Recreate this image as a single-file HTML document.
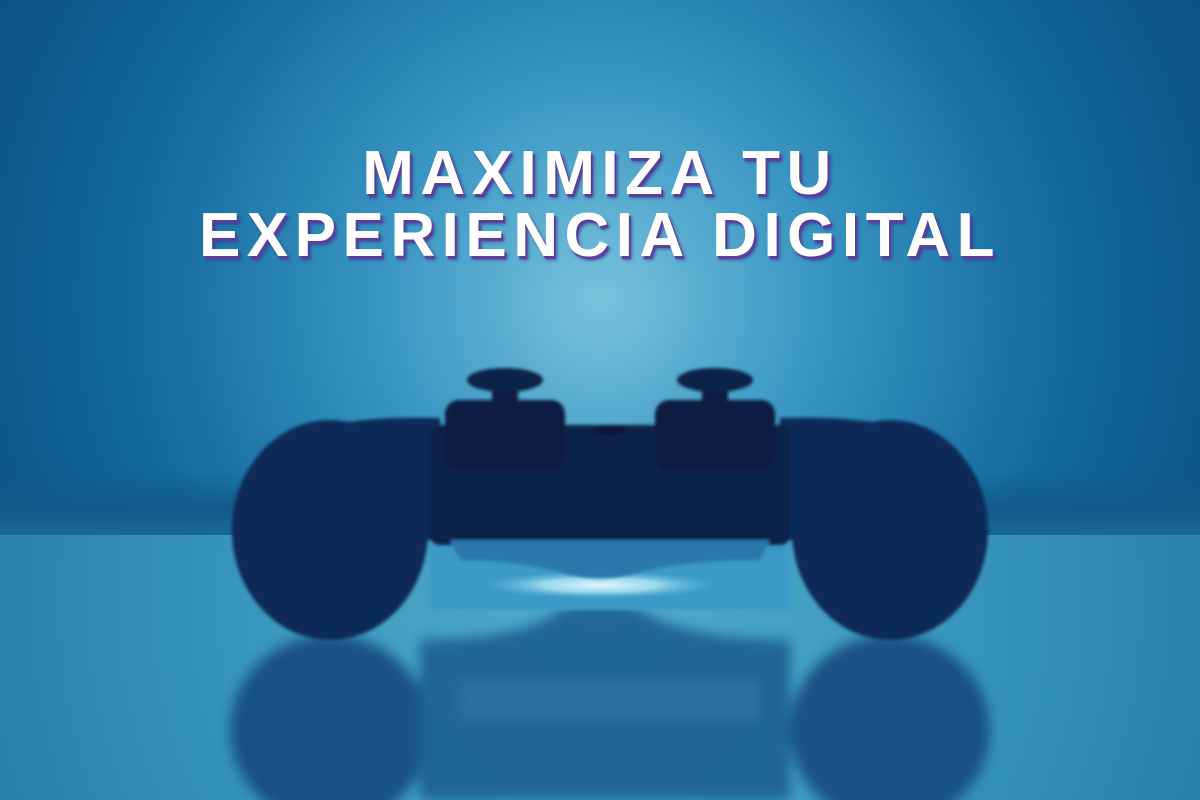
<!DOCTYPE html>
<html><head><meta charset="utf-8"><style>
html,body{margin:0;padding:0;width:1200px;height:800px;overflow:hidden;background:#0f5a90}
.t{position:absolute;left:0;width:1200px;text-align:center;color:#fff;font-family:"Liberation Sans",Arial,sans-serif;font-weight:bold;font-size:62px;letter-spacing:6.5px;text-shadow:2px 3px 0 #5b3f9e,3px 4px 3px rgba(60,30,120,.6);line-height:62px}
</style></head><body>
<svg width="1200" height="800" style="position:absolute;left:0;top:0">
<defs>
<radialGradient id="bg" cx="600" cy="300" r="720" gradientUnits="userSpaceOnUse">
<stop offset="0" stop-color="#78c2dc"/><stop offset="0.3" stop-color="#3a96c2"/><stop offset="0.65" stop-color="#12699c"/><stop offset="1" stop-color="#0b4c80"/></radialGradient>
<linearGradient id="hz" x1="0" y1="0" x2="0" y2="1"><stop offset="0" stop-color="#135a8a" stop-opacity="0"/><stop offset="0.55" stop-color="#135a8a"/><stop offset="1" stop-color="#1a6a98"/></linearGradient>
<radialGradient id="fl" cx="600" cy="600" r="700" gradientUnits="userSpaceOnUse"><stop offset="0" stop-color="#52acc8"/><stop offset="0.5" stop-color="#3a96bc"/><stop offset="1" stop-color="#237aa6"/></radialGradient>
<radialGradient id="glow" cx="0.5" cy="0.5" r="0.5"><stop offset="0" stop-color="#e0f6ff"/><stop offset="0.5" stop-color="#9ad8ee"/><stop offset="1" stop-color="#5ab4dc" stop-opacity="0"/></radialGradient>
<filter id="b"><feGaussianBlur stdDeviation="6"/></filter>
<filter id="b2"><feGaussianBlur stdDeviation="1.5"/></filter>
</defs>
<rect width="1200" height="800" fill="url(#bg)"/>
<rect y="470" width="1200" height="70" fill="url(#hz)"/>
<rect y="535" width="1200" height="265" fill="url(#fl)"/>
<g filter="url(#b)" opacity="0.9">
<ellipse cx="330" cy="730" rx="100" ry="95" fill="#164c7e"/>
<ellipse cx="890" cy="730" rx="100" ry="95" fill="#164c7e"/>
<path d="M420 640 Q520 640 560 610 Q600 590 640 610 Q690 640 790 640 L790 800 L420 800Z" fill="#1e5e90"/>
<rect x="460" y="680" width="300" height="40" fill="#2a6c9c"/>
</g>
<rect x="430" y="540" width="360" height="70" fill="#3c9ac6" filter="url(#b2)"/>
<ellipse cx="600" cy="585" rx="115" ry="14" fill="url(#glow)"/>
<g filter="url(#b2)">
<ellipse cx="330" cy="530" rx="98" ry="110" fill="#0f2c58"/>
<ellipse cx="890" cy="530" rx="98" ry="110" fill="#0f2c58"/>
<path d="M300 440 Q330 415 440 418 L440 540 L300 540Z" fill="#0f2c58"/>
<path d="M920 440 Q890 415 780 418 L780 540 L920 540Z" fill="#0f2c58"/>
<rect x="430" y="425" width="360" height="120" rx="10" fill="#0b2048"/>
<path d="M450 540 L770 540 L760 560 Q690 560 640 572 Q600 585 560 572 Q510 560 460 560Z" fill="#2a78ac"/>
<rect x="445" y="400" width="120" height="70" rx="14" fill="#0a1c40"/>
<rect x="655" y="400" width="120" height="70" rx="14" fill="#0a1c40"/>
<rect x="492" y="380" width="26" height="25" fill="#0a1c40"/>
<rect x="702" y="380" width="26" height="25" fill="#0a1c40"/>
<ellipse cx="505" cy="380" rx="38" ry="12" fill="#0c2248"/>
<ellipse cx="715" cy="380" rx="38" ry="12" fill="#0c2248"/>
<ellipse cx="610" cy="430" rx="16" ry="5" fill="#081838"/>
</g>
</svg>
<div class="t" style="top:143px">MAXIMIZA TU</div>
<div class="t" style="top:205px">EXPERIENCIA DIGITAL</div>
</body></html>
